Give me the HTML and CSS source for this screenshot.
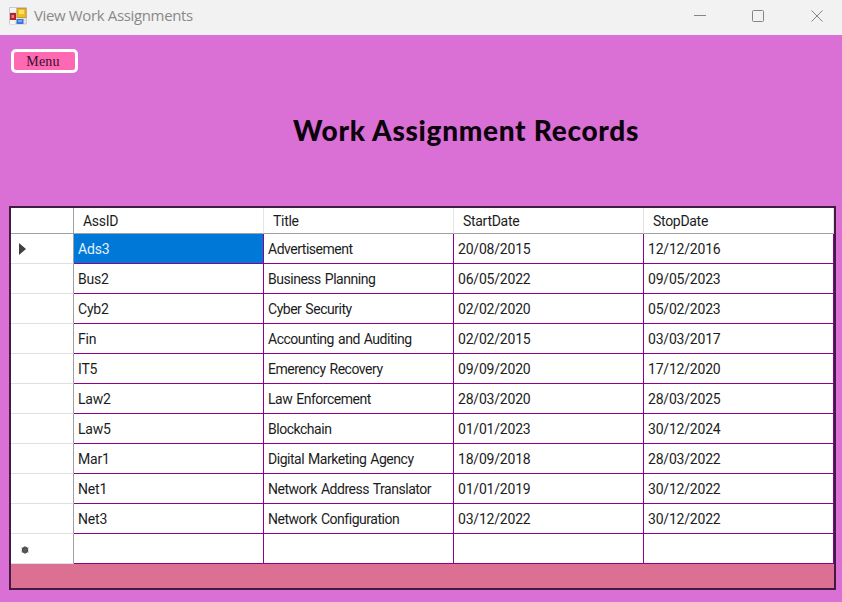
FILE: index.html
```
<!DOCTYPE html>
<html lang="en">
<head>
<meta charset="utf-8">
<title>View Work Assignments</title>
<link rel="stylesheet" href="styles.css">
</head>
<body>
<header class="titlebar">
  <svg class="app-icon" width="18" height="18" viewBox="0 0 18 18">
    <path d="M.5 .5h17v16.500h-17z" fill="#e3e3e8" stroke="#c9c9cf"/>
    <path d="M1 1h6v4H1zM1 13h5v4H1z" fill="#f7f7f7"/>
    <rect x="1" y="6" width="6" height="7" fill="#b3232b"/>
    <rect x="2.500" y="8" width="2.500" height="3" fill="#e88580"/>
    <rect x="8" y="1.500" width="9" height="9" fill="#f3bd20" stroke="#c9982d"/>
    <rect x="10" y="3" width="5" height="4" fill="#ffdf68"/>
    <rect x="7.500" y="12" width="7" height="5" fill="#3976d8"/>
    <rect x="9" y="13" width="4" height="2" fill="#76a8f0"/>
  </svg>
  <span class="caption">View Work Assignments</span>
  <svg class="controls" width="130" height="14" viewBox="0 0 130 14" fill="none" stroke="#858585">
    <path d="M0 6.500h12"/>
    <rect x="58.500" y="1.500" width="11" height="11" rx="1"/>
    <path d="M117.500 1.500l11 11M128.500 1.500l-11 11"/>
  </svg>
</header>
<main class="form">
  <button class="menu">Menu</button>
  <h1>Work Assignment Records</h1>
  <div class="grid-panel">
    <table>
      <thead><tr><th></th><th>AssID</th><th>Title</th><th>StartDate</th><th>StopDate</th></tr></thead>
      <tbody>
        <tr><th><svg class="current" width="7" height="12" viewBox="0 0 7 12"><path d="M0 0l7 6-7 6z" fill="#404040"/></svg></th><td class="selected">Ads3</td><td>Advertisement</td><td>20/08/2015</td><td>12/12/2016</td></tr>
        <tr><th></th><td>Bus2</td><td>Business Planning</td><td>06/05/2022</td><td>09/05/2023</td></tr>
        <tr><th></th><td>Cyb2</td><td>Cyber Security</td><td>02/02/2020</td><td>05/02/2023</td></tr>
        <tr><th></th><td>Fin</td><td>Accounting and Auditing</td><td>02/02/2015</td><td>03/03/2017</td></tr>
        <tr><th></th><td>IT5</td><td>Emerency Recovery</td><td>09/09/2020</td><td>17/12/2020</td></tr>
        <tr><th></th><td>Law2</td><td>Law Enforcement</td><td>28/03/2020</td><td>28/03/2025</td></tr>
        <tr><th></th><td>Law5</td><td>Blockchain</td><td>01/01/2023</td><td>30/12/2024</td></tr>
        <tr><th></th><td>Mar1</td><td>Digital Marketing Agency</td><td>18/09/2018</td><td>28/03/2022</td></tr>
        <tr><th></th><td>Net1</td><td>Network Address Translator</td><td>01/01/2019</td><td>30/12/2022</td></tr>
        <tr><th></th><td>Net3</td><td>Network Configuration</td><td>03/12/2022</td><td>30/12/2022</td></tr>
        <tr><th><svg class="new-row" width="8" height="8" viewBox="0 0 8 8"><circle cx="4" cy="4" r="3.200" fill="#484848"/><path d="M4 .2v7.600M.5 2l7 4M7.500 2l-7 4" stroke="#606060"/></svg></th><td></td><td></td><td></td><td></td></tr>
      </tbody>
    </table>
  </div>
</main>
</body>
</html>
```
FILE: styles.css
```
* { box-sizing: border-box; }
body {
  margin: 0;
  width: 842px;
  height: 602px;
  overflow: hidden;
  background: #da6fd6;
  font-family: Roboto, "Liberation Sans", sans-serif;
}
.titlebar {
  display: flex;
  align-items: center;
  height: 35px;
  padding: 0 18px 4px 9px;
  background: #f2f2f2;
}
.caption {
  margin: -1px 0 0 7px;
  font: 15px/20px "Open Sans", "Noto Sans", sans-serif;
  letter-spacing: -0.36px;
  color: #898989;
}
.controls { margin-left: auto; }
.form { padding: 14px 6px 0 9px; }
.menu {
  display: block;
  width: 67px;
  height: 24px;
  margin: 0 0 0 2px;
  padding: 1px 3px 0 0;
  border: 3px solid #fff;
  border-radius: 5px;
  background: #ff69b4;
  font: 14px/17px "Liberation Serif", serif;
  letter-spacing: 0.2px;
  color: #35102b;
}
h1 {
  margin: 37px 0 56px 284px;
  font: 900 28px/40px Lato, sans-serif;
  letter-spacing: 0.7px;
  white-space: nowrap;
  color: #0c020c;
}
.grid-panel {
  height: 384px;
  border: 2px solid #431a42;
  background: #db7093;
}
table {
  width: 823px;
  table-layout: fixed;
  border-collapse: separate;
  border-spacing: 0;
  font-size: 14px;
  line-height: 18px;
  color: #1c1c1c;
}
th, td {
  height: 30px;
  padding: 0 0 0 4px;
  border-style: solid;
  border-width: 0 1px 1px 0;
  border-color: #900090;
  background: #fff;
  font-weight: 400;
  text-align: left;
  white-space: nowrap;
}
td { letter-spacing: -0.2px; }
td:nth-child(3) { letter-spacing: -0.48px; word-spacing: 1px; }
thead th {
  height: 26px;
  padding: 1px 0 0 9px;
  border-right-color: #e4e4e4;
  border-bottom-color: #a0a0a0;
  letter-spacing: -0.3px;
}
thead th:first-child,
tbody th { border-right-color: #a0a0a0; }
thead th:first-child { width: 63px; }
tbody th { border-bottom-color: #e0e0e0; }
.selected { background: #0078d7; color: #e3f3ff; }
.current, .new-row { display: block; }
.current { margin: 1px 0 0 4px; }
.new-row { margin: 3px 0 0 6px; }
```
